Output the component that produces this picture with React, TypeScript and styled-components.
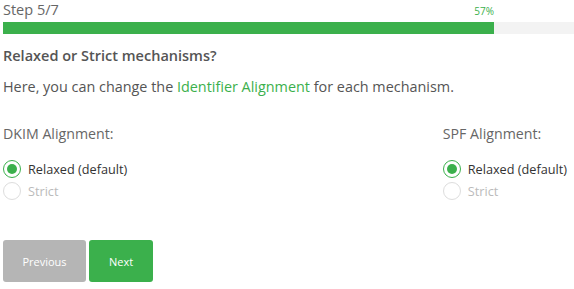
import React, { useState } from "react";
import styled, { createGlobalStyle } from "styled-components";

const GlobalStyle = createGlobalStyle`
  body {
    margin: 0;
    background: #fff;
    font-family: "Open Sans", "Noto Sans", sans-serif;
  }
`;

const Page = styled.div`
  padding: 0 0 0 3px;
  width: 571px;
  box-sizing: border-box;
`;

const StepHeader = styled.div`
  display: flex;
  align-items: flex-end;
  justify-content: space-between;
  width: 491px;
  height: 22px;
`;

const StepLabel = styled.div`
  font-size: 14.5px;
  color: #666;
  line-height: 19px;
  align-self: flex-start;
`;

const Percent = styled.div`
  font-size: 10px;
  color: #3bb04c;
  line-height: 14px;
  margin-bottom: 4px;
`;

const Track = styled.div`
  height: 12px;
  background: #f3f3f3;
  margin-right: -3px;
`;

const Fill = styled.div`
  height: 100%;
  background: #3bb04c;
`;

const Title = styled.h3`
  margin: 12px 0 0;
  font-size: 14.5px;
  font-weight: 600;
  color: #555;
  line-height: 20px;
`;

const Intro = styled.p`
  margin: 10px 0 0;
  font-size: 14.4px;
  color: #555;
  line-height: 22px;
`;

const Link = styled.span`
  color: #3bb04c;
`;

const Columns = styled.div`
  display: flex;
  justify-content: space-between;
  margin-top: 26px;
  padding-right: 4px;
`;

const Column = styled.div`
  display: flex;
  flex-direction: column;
`;

const GroupLabel = styled.div`
  font-size: 14.2px;
  color: #666;
  line-height: 20px;
  margin-bottom: 14px;
`;

const Option = styled.label<{ $disabled?: boolean }>`
  display: flex;
  align-items: center;
  gap: 7px;
  height: 22px;
  font-size: 12.7px;
  color: ${(p) => (p.$disabled ? "#bbb" : "#333")};
  cursor: pointer;
`;

const Radio = styled.span<{ $checked: boolean }>`
  width: 18px;
  height: 18px;
  box-sizing: border-box;
  border-radius: 50%;
  border: 1px solid ${(p) => (p.$checked ? "#3bb04c" : "#ddd")};
  display: flex;
  align-items: center;
  justify-content: center;
  background: #fff;
  &::after {
    content: "";
    width: 10px;
    height: 10px;
    border-radius: 50%;
    background: ${(p) => (p.$checked ? "#3bb04c" : "transparent")};
  }
`;

const Buttons = styled.div`
  display: flex;
  gap: 3px;
  margin-top: 38px;
`;

const Button = styled.button<{ $primary?: boolean }>`
  height: 42px;
  padding: 0 10px;
  border: none;
  border-radius: 3px;
  font-family: inherit;
  font-size: 11px;
  color: #fff;
  background: ${(p) => (p.$primary ? "#3bb04c" : "#b5b5b5")};
  cursor: pointer;
`;

const options = ["Relaxed (default)", "Strict"];

const RadioGroup: React.FC<{ label: string }> = ({ label }) => {
  const [value, setValue] = useState(0);
  return (
    <Column>
      <GroupLabel>{label}</GroupLabel>
      {options.map((o, i) => (
        <Option key={o} $disabled={i !== 0} onClick={() => setValue(i)}>
          <Radio $checked={value === i} />
          {o}
        </Option>
      ))}
    </Column>
  );
};

const App: React.FC = () => {
  return (
    <Page>
      <GlobalStyle />
      <StepHeader>
        <StepLabel>Step 5/7</StepLabel>
        <Percent>57%</Percent>
      </StepHeader>
      <Track>
        <Fill style={{ width: "491px" }} />
      </Track>
      <Title>Relaxed or Strict mechanisms?</Title>
      <Intro>
        Here, you can change the <Link>Identifier Alignment</Link> for each mechanism.
      </Intro>
      <Columns>
        <RadioGroup label="DKIM Alignment:" />
        <RadioGroup label="SPF Alignment:" />
      </Columns>
      <Buttons>
        <Button style={{ width: "83px" }}>Previous</Button>
        <Button $primary style={{ width: "64px" }}>Next</Button>
      </Buttons>
    </Page>
  );
};

export default App;
